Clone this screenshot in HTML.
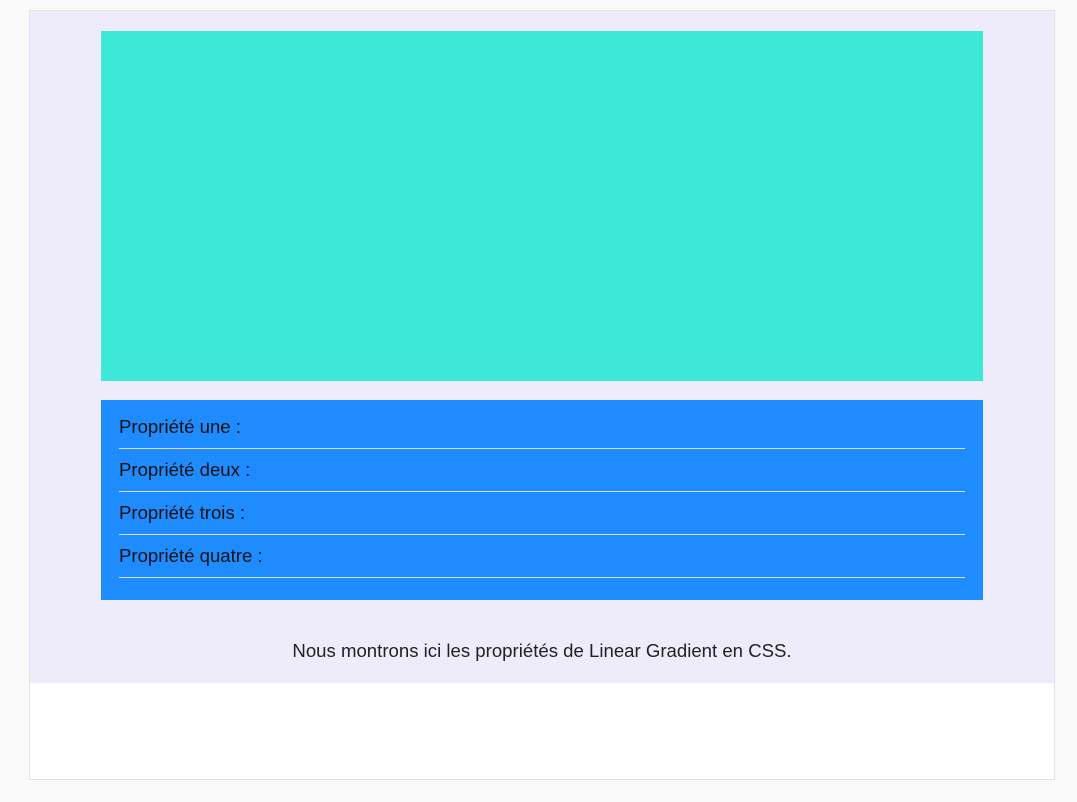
<!DOCTYPE html>
<html><head><style>
html,body{margin:0;padding:0;width:1077px;height:802px;background:#f9f9f9;overflow:hidden;font-family:"Liberation Sans",sans-serif}
.frame{position:absolute;left:29px;top:10px;width:1024px;height:768px;background:#fff;border:1px solid #e2e2e2}
.lav{position:absolute;left:0;top:0;width:1024px;height:672px;background:#eeebfa}
.teal{position:absolute;left:71px;top:20px;width:882px;height:350px;background:#3de8d9}
.blue{position:absolute;left:71px;top:389px;width:882px;height:200px;background:#1e8cff}
.row{position:absolute;left:18px;width:846px;height:31px;border-bottom:1px solid #ddd;font-size:18.6px;color:#111;line-height:20px;top:0}
.cap{position:absolute;left:0;width:1024px;top:629px;text-align:center;font-size:18.6px;color:#222}
</style></head><body>
<div class="frame"><div class="lav">
<div class="teal"></div>
<div class="blue">
<div class="row" style="top:17px">Propriété une :</div>
<div class="row" style="top:60px">Propriété deux :</div>
<div class="row" style="top:103px">Propriété trois :</div>
<div class="row" style="top:146px">Propriété quatre :</div>
</div>
<div class="cap">Nous montrons ici les propriétés de Linear Gradient en CSS.</div>
</div></div>
</body></html>
